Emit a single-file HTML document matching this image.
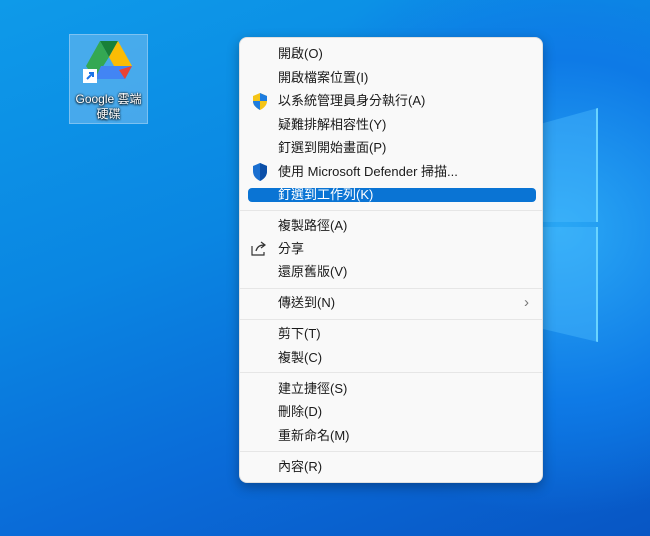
<!DOCTYPE html>
<html><head><meta charset="utf-8"><style>
*{margin:0;padding:0;box-sizing:border-box}
body{width:650px;height:536px;overflow:hidden;position:relative;font-family:"Liberation Sans","Noto Sans CJK TC",sans-serif;
background:radial-gradient(ellipse 420px 380px at 560px 230px,#2aa8f5 0%,#0e7ae6 45%,transparent 75%),linear-gradient(160deg,#0e9ae9 0%,#0a86e2 40%,#0a6bd8 70%,#0856c4 100%)}
.pane{position:absolute;background:rgba(80,190,255,.4);border-right:2px solid #6ad4ff}
.tile{position:absolute;left:69px;top:34px;width:79px;height:90px;background:rgba(120,190,240,.55);border:1px solid rgba(160,210,245,.6)}
.lbl{position:absolute;left:69px;top:92px;width:79px;text-align:center;color:#fff;font-size:12px;line-height:15px;text-shadow:0 0 2px #000,0 1px 2px #000}
.menu{position:absolute;left:239px;top:37px;width:304px;height:446px;background:#f9f9f9;border-radius:8px;box-shadow:0 4px 12px rgba(0,0,0,.3);border:1px solid #e0e0e0}
.it{position:absolute;left:38px;font-size:13px;color:#1a1a1a;line-height:16px;white-space:nowrap}
.sep{position:absolute;left:0;right:0;height:1px;background:#e6e6e6}
.hl{position:absolute;left:8px;top:150px;width:288px;height:14px;background:#0a74d4;border-radius:4px}
</style></head><body>
<div class="pane" style="left:540px;top:108px;width:58px;height:114px;clip-path:polygon(0 14%,100% 0,100% 100%,0 100%)"></div>
<div class="pane" style="left:540px;top:227px;width:58px;height:115px;clip-path:polygon(0 0,100% 0,100% 100%,0 88%)"></div>
<div class="tile"></div>
<svg style="position:absolute;left:82px;top:39px" width="54" height="46" viewBox="0 0 52 46">
<polygon points="17,2 35,2 26,18" fill="#188038"/>
<polygon points="17,2 26,18 12,40 3,27" fill="#34a853"/>
<polygon points="35,2 49,27 31,27 26,18" fill="#fbbc04"/>
<polygon points="12,40 18,27 49,27 42,40" fill="#4285f4"/>
<polygon points="49,27 42,40 36,31" fill="#ea4335"/>
<rect x="0" y="30" width="14" height="14" fill="#fff"/>
<path d="M4 40 L10 34 M6 34 H10 V38" stroke="#1a73e8" stroke-width="2" fill="none"/>
</svg>
<div class="lbl">Google 雲端<br>硬碟</div>
<div class="menu">
<div class="hl"></div>
<div class="it" style="top:8px">開啟(O)</div>
<div class="it" style="top:32px">開啟檔案位置(I)</div>
<svg style="position:absolute;left:12px;top:55px" width="16" height="17" viewBox="0 0 16 17"><path d="M8 0 L15 3 V8 C15 12 12 15 8 17 C4 15 1 12 1 8 V3Z" fill="#f5c518"/><path d="M8 0 L15 3 V8 H8Z M1 8 H8 V17 C4 15 1 12 1 8Z" fill="#1e7de0"/></svg>
<div class="it" style="top:55px">以系統管理員身分執行(A)</div>
<div class="it" style="top:79px">疑難排解相容性(Y)</div>
<div class="it" style="top:102px">釘選到開始畫面(P)</div>
<svg style="position:absolute;left:12px;top:125px" width="16" height="18" viewBox="0 0 16 18"><path d="M8 0 L15 3 V8 C15 13 12 16 8 18 C4 16 1 13 1 8 V3Z" fill="#1a6fd0"/><path d="M8 0 L15 3 V8 C15 13 12 16 8 18Z" fill="#0b4fa8"/></svg>
<div class="it" style="top:126px">使用 Microsoft Defender 掃描...</div>
<div class="it" style="top:149px;color:#fff">釘選到工作列(K)</div>
<div class="sep" style="top:172px"></div>
<div class="it" style="top:180px">複製路徑(A)</div>
<svg style="position:absolute;left:11px;top:203px" width="16" height="15" viewBox="0 0 16 15"><path d="M1 5 V14 H13 V11 M5 10 C6 6 9 4 13 4 M10 1 L14 4 L10 7" stroke="#333" stroke-width="1.2" fill="none"/></svg>
<div class="it" style="top:203px">分享</div>
<div class="it" style="top:226px">還原舊版(V)</div>
<div class="sep" style="top:250px"></div>
<div class="it" style="top:257px">傳送到(N)</div>
<div class="it" style="left:284px;top:257px;color:#777;font-size:15px">&#x203A;</div>
<div class="sep" style="top:281px"></div>
<div class="it" style="top:288px">剪下(T)</div>
<div class="it" style="top:312px">複製(C)</div>
<div class="sep" style="top:334px"></div>
<div class="it" style="top:343px">建立捷徑(S)</div>
<div class="it" style="top:366px">刪除(D)</div>
<div class="it" style="top:390px">重新命名(M)</div>
<div class="sep" style="top:413px"></div>
<div class="it" style="top:421px">內容(R)</div>
</div>
</body></html>
